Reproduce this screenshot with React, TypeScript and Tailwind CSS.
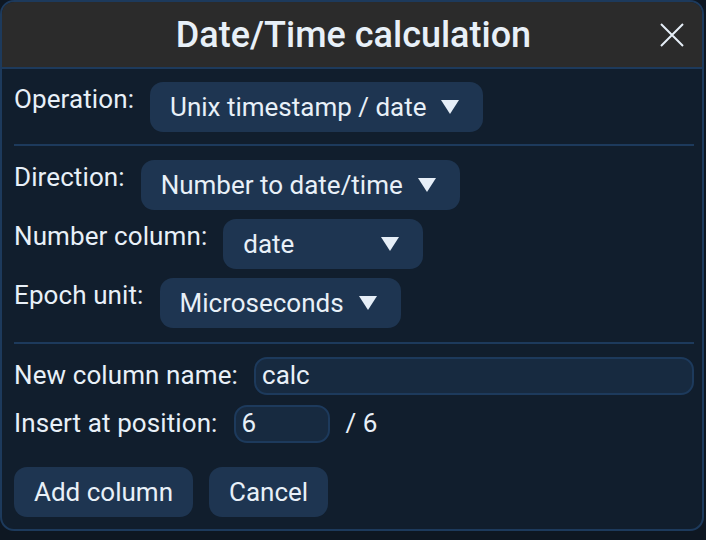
import React from "react";

function Caret() {
  return (
    <svg width="18" height="14" viewBox="0 0 18 14" className="shrink-0">
      <path d="M0 0 H18 L9 14 Z" fill="#e6eef7" />
    </svg>
  );
}

function Select({ value, width }: { value: string; width: string }) {
  return (
    <div
      className={`flex h-[50px] items-center justify-between gap-3 rounded-[13px] bg-[#1e3551] pl-5 pr-6 ${width}`}
    >
      <span>{value}</span>
      <Caret />
    </div>
  );
}

function Row({ label, children }: { label: string; children: React.ReactNode }) {
  return (
    <div className="flex items-start gap-4">
      <span className="-mt-[2px] tracking-[0.1px]">{label}</span>
      {children}
    </div>
  );
}

export default function App() {
  return (
    <div
      className="h-[540px] w-[706px] bg-[#0e1722] text-[#e8f0f8]"
      style={{ fontFamily: "Roboto, 'Liberation Sans', sans-serif" }}
    >
      <div className="flex h-[531px] w-[704px] flex-col overflow-hidden rounded-[14px] border-2 border-[#1d3a5c] bg-[#111e2d]">
        <div className="relative flex h-[67px] shrink-0 items-center justify-center border-b-2 border-[#1d3a5c] bg-[#2b2b2b]">
          <h1 className="pl-[3px] text-[36px] font-medium">Date/Time calculation</h1>
          <button className="absolute right-[17px] top-[20px] p-0">
            <svg width="26" height="26" viewBox="0 0 26 26">
              <path d="M2 2 L24 24 M24 2 L2 24" stroke="#e6eef7" strokeWidth="2" />
            </svg>
          </button>
        </div>

        <div className="flex flex-col pl-[12px] pr-[8px] pt-[13px] text-[26px]">
          <Row label="Operation:">
            <Select value="Unix timestamp / date" width="w-[333px]" />
          </Row>

          <div className="mt-[12px] mb-[14px] h-[2px] bg-[#1d3a5c]" />

          <div className="flex flex-col gap-[9px]">
            <Row label="Direction:">
              <Select value="Number to date/time" width="w-[319px]" />
            </Row>
            <Row label="Number column:">
              <Select value="date" width="w-[200px]" />
            </Row>
            <Row label="Epoch unit:">
              <Select value="Microseconds" width="w-[241px]" />
            </Row>
          </div>

          <div className="mt-[14px] mb-[12px] h-[2px] bg-[#1d3a5c]" />

          <div className="flex flex-col gap-[9px]">
            <div className="flex items-center gap-4">
              <span className="tracking-[0.1px]">New column name:</span>
              <div className="flex h-[38px] flex-1 items-center rounded-[13px] border-2 border-[#1d3a5c] bg-[#172a40] px-[6px]">
                calc
              </div>
            </div>
            <div className="flex items-center gap-4">
              <span className="tracking-[0.1px]">Insert at position:</span>
              <div className="flex h-[38px] w-[96px] items-center rounded-[13px] border-2 border-[#1d3a5c] bg-[#172a40] px-[6px]">
                6
              </div>
              <span>/ 6</span>
            </div>
          </div>

          <div className="mt-[24px] flex gap-4">
            <button className="h-[50px] rounded-[13px] bg-[#1e3551] px-5">Add column</button>
            <button className="h-[50px] rounded-[13px] bg-[#1e3551] px-5">Cancel</button>
          </div>
        </div>
      </div>
    </div>
  );
}
